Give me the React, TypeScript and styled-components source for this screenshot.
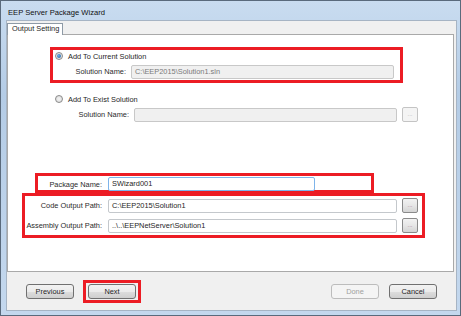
import styled, { createGlobalStyle } from "styled-components";

const GlobalStyle = createGlobalStyle`
  html, body {
    margin: 0;
    padding: 0;
    background: #fff;
  }
  body {
    font-family: "Liberation Sans", Arial, sans-serif;
    font-size: 7.4px;
    color: #1e1e1e;
  }
`;

const Window = styled.div`
  width: 461px;
  height: 316px;
  box-sizing: border-box;
  display: flex;
  flex-direction: column;
  border: 1px solid #5a6a7c;
  background: linear-gradient(180deg, #c9dcf0 0%, #b4cce6 30%, #c4d8ee 100%);
`;

const TitleBar = styled.div`
  height: 19px;
  display: flex;
  align-items: flex-end;
  padding: 0 0 3px 7px;
  box-sizing: border-box;
  font-size: 7.6px;
  color: #111;
`;

const Frame = styled.div`
  flex: 1;
  display: flex;
  flex-direction: column;
  margin: 0 3px 4px 5px;
  background: #f0f0f0;
  border: 1px solid #a6b4c4;
`;

const TabStrip = styled.div`
  height: 13px;
  display: flex;
  align-items: flex-end;
`;

const Tab = styled.div`
  height: 12px;
  box-sizing: border-box;
  padding: 0 4px;
  width: 56px;
  background: #fff;
  border: 1px solid #8e9aa6;
  border-bottom: none;
  line-height: 10px;
  white-space: nowrap;
  margin-bottom: -1px;
  position: relative;
  z-index: 1;
`;

const TabPanel = styled.div`
  height: 236px;
  background: #fff;
  border: 1px solid #a9a9a9;
  margin-right: 2px;
  display: flex;
  flex-direction: column;
`;

const Highlight = styled.div<{ $left: number; $top: number; $width: number; $height: number }>`
  box-sizing: border-box;
  margin-left: ${(p) => p.$left}px;
  margin-top: ${(p) => p.$top}px;
  width: ${(p) => p.$width}px;
  height: ${(p) => p.$height}px;
  border: 3px solid #ec1c24;
  display: flex;
  flex-direction: column;
`;

const Plain = styled.div<{ $left: number; $top: number }>`
  margin-left: ${(p) => p.$left}px;
  margin-top: ${(p) => p.$top}px;
  display: flex;
  flex-direction: column;
`;

const RadioRow = styled.label<{ $pad: number }>`
  display: flex;
  align-items: center;
  gap: 5px;
  height: 10px;
  padding-left: ${(p) => p.$pad}px;
  margin-top: 1px;
  white-space: nowrap;
`;

const Radio = styled.span<{ $checked?: boolean }>`
  width: 8px;
  height: 8px;
  border-radius: 50%;
  box-sizing: border-box;
  border: 1px solid #8a8a8a;
  background: radial-gradient(circle, #f4f4f4 0%, #d8d8d8 100%);
  display: flex;
  align-items: center;
  justify-content: center;

  &::after {
    content: "";
    display: ${(p) => (p.$checked ? "block" : "none")};
    width: 4px;
    height: 4px;
    border-radius: 50%;
    background: radial-gradient(circle at 40% 40%, #6ab0e8 0%, #1b5a9c 100%);
  }
`;

const FieldRow = styled.div<{ $top: number }>`
  display: flex;
  align-items: center;
  margin-top: ${(p) => p.$top}px;
  height: 15px;
  white-space: nowrap;
`;

const Label = styled.span<{ $width: number }>`
  width: ${(p) => p.$width}px;
  text-align: right;
  flex-shrink: 0;
  color: #2a2a2a;
`;

const TextBox = styled.div<{ $width: number; $gap: number; $disabled?: boolean; $focus?: boolean }>`
  width: ${(p) => p.$width}px;
  margin-left: ${(p) => p.$gap}px;
  height: 14px;
  box-sizing: border-box;
  border: 1px solid ${(p) => (p.$focus ? "#7eb4ea" : p.$disabled ? "#c8c8c8" : "#c4c8cc")};
  border-radius: 2px;
  background: ${(p) => (p.$disabled ? "#f0f0f0" : "#fff")};
  color: ${(p) => (p.$disabled ? "#7a7a7a" : "#1e1e1e")};
  padding-left: 3px;
  line-height: 12px;
  overflow: hidden;
`;

const BrowseButton = styled.div<{ $disabled?: boolean }>`
  width: 16px;
  height: 15px;
  box-sizing: border-box;
  margin-left: 5px;
  border: 1px solid ${(p) => (p.$disabled ? "#c4c4c4" : "#8a8a8a")};
  border-radius: 2px;
  background: ${(p) =>
    p.$disabled ? "#f4f4f4" : "linear-gradient(180deg, #f2f2f2 0%, #e6e6e6 50%, #d4d4d4 100%)"};
  color: ${(p) => (p.$disabled ? "#b0b0b0" : "#a0708c")};
  font-size: 6px;
  line-height: 13px;
  text-align: center;
`;

const Footer = styled.div`
  flex: 1;
  display: flex;
  align-items: center;
  padding: 0 19px;
`;

const ButtonGroup = styled.div`
  display: flex;
  align-items: center;
  gap: 10px;
`;

const Spacer = styled.div`
  flex: 1;
`;

const Button = styled.div<{ $disabled?: boolean }>`
  width: 48px;
  height: 15px;
  box-sizing: border-box;
  border: 1px solid ${(p) => (p.$disabled ? "#bcbcbc" : "#707070")};
  border-radius: 3px;
  background: ${(p) =>
    p.$disabled ? "#f4f4f4" : "linear-gradient(180deg, #f2f2f2 0%, #ebebeb 50%, #dddddd 51%, #cfcfcf 100%)"};
  color: ${(p) => (p.$disabled ? "#a0a0a0" : "#1e1e1e")};
  text-align: center;
  line-height: 13px;
`;

const NextMark = styled.div`
  border: 3px solid #ec1c24;
  padding: 1px 2px;
  margin-left: -1px;
  display: flex;
`;

export default function App() {
  return (
    <>
      <GlobalStyle />
      <Window>
        <TitleBar>EEP Server Package Wizard</TitleBar>
        <Frame>
          <TabStrip>
            <Tab>Output Setting</Tab>
          </TabStrip>
          <TabPanel>
            <Highlight $left={42} $top={12} $width={353} $height={36}>
              <RadioRow $pad={2}>
                <Radio $checked />
                Add To Current Solution
              </RadioRow>
              <FieldRow $top={3}>
                <Label $width={73}>Solution Name:</Label>
                <TextBox $width={263} $gap={5} $disabled>
                  C:\EEP2015\Solution1.sln
                </TextBox>
              </FieldRow>
            </Highlight>

            <Plain $left={47} $top={10}>
              <RadioRow $pad={0}>
                <Radio />
                Add To Exist Solution
              </RadioRow>
              <FieldRow $top={3}>
                <Label $width={74}>Solution Name:</Label>
                <TextBox $width={263} $gap={5} $disabled />
                <BrowseButton $disabled>...</BrowseButton>
              </FieldRow>
            </Plain>

            <Highlight $left={27} $top={51} $width={339} $height={20}>
              <FieldRow $top={1}>
                <Label $width={64}>Package Name:</Label>
                <TextBox $width={207} $gap={6} $focus>
                  SWizard001
                </TextBox>
              </FieldRow>
            </Highlight>

            <Highlight $left={14} $top={0} $width={403} $height={45}>
              <FieldRow $top={2}>
                <Label $width={77}>Code Output Path:</Label>
                <TextBox $width={289} $gap={6}>
                  C:\EEP2015\Solution1
                </TextBox>
                <BrowseButton>...</BrowseButton>
              </FieldRow>
              <FieldRow $top={5}>
                <Label $width={77}>Assembly Output Path:</Label>
                <TextBox $width={289} $gap={6}>
                  ..\..\EEPNetServer\Solution1
                </TextBox>
                <BrowseButton>...</BrowseButton>
              </FieldRow>
            </Highlight>
          </TabPanel>
          <Footer>
            <ButtonGroup>
              <Button>Previous</Button>
              <NextMark>
                <Button>Next</Button>
              </NextMark>
            </ButtonGroup>
            <Spacer />
            <ButtonGroup>
              <Button $disabled>Done</Button>
              <Button>Cancel</Button>
            </ButtonGroup>
          </Footer>
        </Frame>
      </Window>
    </>
  );
}
